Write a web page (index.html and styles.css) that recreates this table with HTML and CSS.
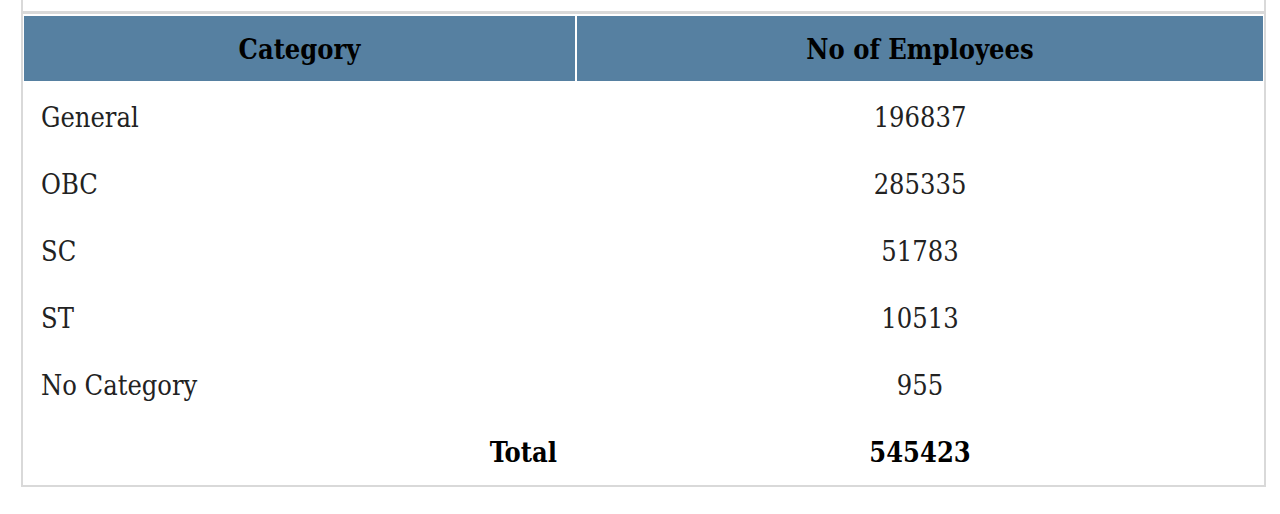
FILE: index.html
```html
<!DOCTYPE html>
<html>
<head>
<meta charset="utf-8">
<link rel="stylesheet" href="styles.css">
</head>
<body>
<div class="wrap">
  <div class="top-gap"></div>
  <div class="top-rule"></div>
  <table class="emp-table">
    <thead>
      <tr><th class="col-cat">Category</th><th>No of Employees</th></tr>
    </thead>
    <tbody>
      <tr><td>General</td><td class="num">196837</td></tr>
      <tr><td>OBC</td><td class="num">285335</td></tr>
      <tr><td>SC</td><td class="num">51783</td></tr>
      <tr><td>ST</td><td class="num">10513</td></tr>
      <tr><td>No Category</td><td class="num">955</td></tr>
      <tr class="total"><td class="total-label">Total</td><td class="num">545423</td></tr>
    </tbody>
  </table>
</div>
</body>
</html>
```
FILE: styles.css
```css
html, body {
  margin: 0;
  padding: 0;
  background: #ffffff;
}
body {
  font-family: "DejaVu Serif Condensed", "DejaVu Serif", serif;
  font-stretch: condensed;
  color: #222222;
}
.wrap {
  margin-left: 21px;
  width: 1241px;
  border-left: 2px solid #d9d9d9;
  border-right: 2px solid #d9d9d9;
  border-bottom: 2px solid #d9d9d9;
}
.top-gap {
  height: 11px;
}
.top-rule {
  height: 3px;
  background: #d9d9d9;
}
.emp-table {
  table-layout: fixed;
  width: 1243px;
  margin: 0 -1px;
  border-collapse: separate;
  border-spacing: 2px;
  font-size: 27px;
  line-height: 31px;
}
.emp-table th,
.emp-table td {
  box-sizing: border-box;
  padding: 19px 17px 15px;
  height: 65px;
}
.emp-table th {
  background: #5680a1;
  color: #000000;
  font-weight: bold;
  text-align: center;
  padding-top: 18px;
  padding-bottom: 16px;
}
.emp-table th.col-cat {
  width: 551px;
}
.emp-table td {
  text-align: left;
}
.emp-table td.num {
  text-align: center;
}
.total td {
  font-weight: bold;
  color: #000000;
}
.total td.total-label {
  text-align: right;
  padding-right: 18px;
}
```
